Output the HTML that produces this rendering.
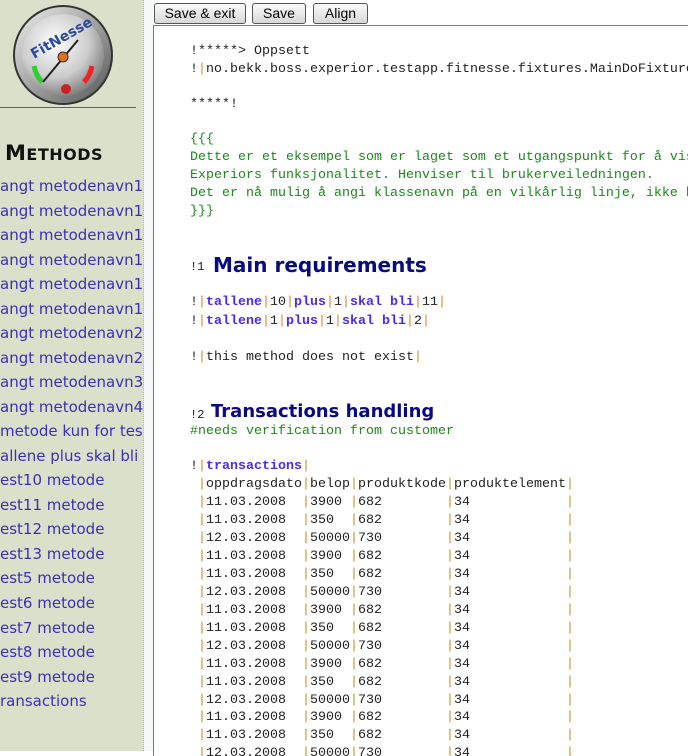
<!DOCTYPE html>
<html><head><meta charset="utf-8"><style>
body{margin:0;width:688px;height:751px;overflow:hidden;background:#fff;position:relative;font-family:"Liberation Sans",sans-serif}
#side{position:absolute;left:0;top:0;width:143px;height:751px;background:#dae0c9;border-right:1px dotted #b8bca8}
#strip{position:absolute;left:144px;top:0;width:9px;height:751px;background:#f6f7fb}
#ed{position:absolute;left:153px;top:25px;width:540px;height:730px;border-left:1px solid #7a7a7a;border-top:1px solid #7a7a7a;background:#fff;overflow:hidden}
#in{position:absolute;left:0;top:2px;width:540px;height:730px}
.btn{position:absolute;top:3px;height:19px;border:1px solid #555;border-radius:3px;background:linear-gradient(#fafafa,#d8d8d8);font:14px "Liberation Sans",sans-serif;line-height:19px;text-align:center;color:#000}
.l{position:absolute;left:36px;white-space:pre;font:13.33px "Liberation Mono",monospace;color:#222;line-height:16px}
.g{color:#1a8a1a}
.p{color:#d08a2a}
.k{color:#4a2af0;font-weight:bold}
.h{position:absolute;white-space:pre;font-weight:bold;color:#0a0a80;font-family:"DejaVu Sans",sans-serif}
.s{position:absolute;left:0;white-space:pre;font:15px "DejaVu Sans",sans-serif;color:#3a30b8}
</style></head><body>
<div id="side">
<svg style="position:absolute;left:12px;top:4px" width="102" height="102" viewBox="0 0 102 102">
<defs><radialGradient id="r" cx="40%" cy="35%" r="70%"><stop offset="0" stop-color="#fff"/><stop offset=".6" stop-color="#ccc"/><stop offset="1" stop-color="#777"/></radialGradient>
<linearGradient id="rim" x1="0" y1="0" x2="1" y2="1"><stop offset="0" stop-color="#eee"/><stop offset="1" stop-color="#555"/></linearGradient></defs>
<circle cx="51" cy="51" r="50" fill="#333"/>
<circle cx="51" cy="51" r="48" fill="url(#rim)"/>
<circle cx="51" cy="51" r="41" fill="url(#r)"/>
<path d="M22 62 A32 32 0 0 0 30 78" stroke="#3c3" stroke-width="5" fill="none"/>
<path d="M80 62 A32 32 0 0 1 72 78" stroke="#e22" stroke-width="5" fill="none"/>
<text x="24" y="40" font-family="DejaVu Sans" font-weight="bold" font-size="14" fill="#2a4aa0" transform="rotate(-30 51 51)">FitNesse</text>
<line x1="31" y1="78" x2="66" y2="36" stroke="#222" stroke-width="2"/>
<circle cx="51" cy="53" r="5" fill="#e07020" stroke="#333"/>
<circle cx="54" cy="85" r="5" fill="#c22"/>
</svg>
<div style="position:absolute;left:0;top:107px;width:136px;height:1px;background:#8a5a20"></div>
<div style="position:absolute;left:5px;top:141px;font:bold 21px 'DejaVu Sans',sans-serif;color:#111;letter-spacing:.5px">M<span style="font-size:16px">ETHODS</span></div>
<div class="s" style="top:177px">angt metodenavn1</div>
<div class="s" style="top:202px">angt metodenavn1</div>
<div class="s" style="top:226px">angt metodenavn1</div>
<div class="s" style="top:251px">angt metodenavn1</div>
<div class="s" style="top:275px">angt metodenavn1</div>
<div class="s" style="top:300px">angt metodenavn1</div>
<div class="s" style="top:324px">angt metodenavn2</div>
<div class="s" style="top:349px">angt metodenavn2</div>
<div class="s" style="top:373px">angt metodenavn3</div>
<div class="s" style="top:398px">angt metodenavn4</div>
<div class="s" style="top:422px">metode kun for tes</div>
<div class="s" style="top:447px">allene plus skal bli</div>
<div class="s" style="top:471px">est10 metode</div>
<div class="s" style="top:496px">est11 metode</div>
<div class="s" style="top:520px">est12 metode</div>
<div class="s" style="top:545px">est13 metode</div>
<div class="s" style="top:569px">est5 metode</div>
<div class="s" style="top:594px">est6 metode</div>
<div class="s" style="top:619px">est7 metode</div>
<div class="s" style="top:643px">est8 metode</div>
<div class="s" style="top:668px">est9 metode</div>
<div class="s" style="top:692px">ransactions</div>
</div>
<div id="strip"></div>
<div class="btn" style="left:154px;width:90px">Save &amp; exit</div>
<div class="btn" style="left:252px;width:52px">Save</div>
<div class="btn" style="left:313px;width:53px">Align</div>
<div id="ed"><div id="in">
<div class="l" style="top:16px">!*****&gt; Oppsett</div>
<div class="l" style="top:34px">!<span class="p">|</span>no.bekk.boss.experior.testapp.fitnesse.fixtures.MainDoFixture</div>
<div class="l" style="top:69px">*****!</div>
<div class="l g" style="top:104px">{{{</div>
<div class="l g" style="top:122px">Dette er et eksempel som er laget som et utgangspunkt for å vise</div>
<div class="l g" style="top:140px">Experiors funksjonalitet. Henviser til brukerveiledningen.</div>
<div class="l g" style="top:158px">Det er nå mulig å angi klassenavn på en vilkårlig linje, ikke bare</div>
<div class="l g" style="top:176px">}}}</div>
<div class="l" style="top:231px;font-size:12px">!1</div>
<div class="h" style="left:59px;top:225px;font-size:20px">Main requirements</div>
<div class="l" style="top:267px">!<span class="p">|</span><span class="k">tallene</span><span class="p">|</span>10<span class="p">|</span><span class="k">plus</span><span class="p">|</span>1<span class="p">|</span><span class="k">skal bli</span><span class="p">|</span>11<span class="p">|</span></div>
<div class="l" style="top:286px">!<span class="p">|</span><span class="k">tallene</span><span class="p">|</span>1<span class="p">|</span><span class="k">plus</span><span class="p">|</span>1<span class="p">|</span><span class="k">skal bli</span><span class="p">|</span>2<span class="p">|</span></div>
<div class="l" style="top:322px">!<span class="p">|</span>this method does not exist<span class="p">|</span></div>
<div class="l" style="top:379px;font-size:12px">!2</div>
<div class="h" style="left:57px;top:373px;font-size:18px">Transactions handling</div>
<div class="l g" style="top:396px">#needs verification from customer</div>
<div class="l" style="top:431px">!<span class="p">|</span><span class="k">transactions</span><span class="p">|</span></div>
<div class="l" style="top:449px"> <span class="p">|</span>oppdragsdato<span class="p">|</span>belop<span class="p">|</span>produktkode<span class="p">|</span>produktelement<span class="p">|</span></div>
<div id="rows"></div>
</div></div>
<script>
var d=[["11.03.2008  ","3900 ","682        "],["11.03.2008  ","350  ","682        "],["12.03.2008  ","50000","730        "]];
var h="";
for(var i=0;i<15;i++){var r=d[i%3];var t=467+i*17.95;
h+='<div class="l" style="top:'+t.toFixed(1)+'px"> <span class="p">|</span>'+r[0]+'<span class="p">|</span>'+r[1]+'<span class="p">|</span>'+r[2]+'<span class="p">|</span>34            <span class="p">|</span></div>';}
document.getElementById("rows").outerHTML=h;
</script>
</body></html>
